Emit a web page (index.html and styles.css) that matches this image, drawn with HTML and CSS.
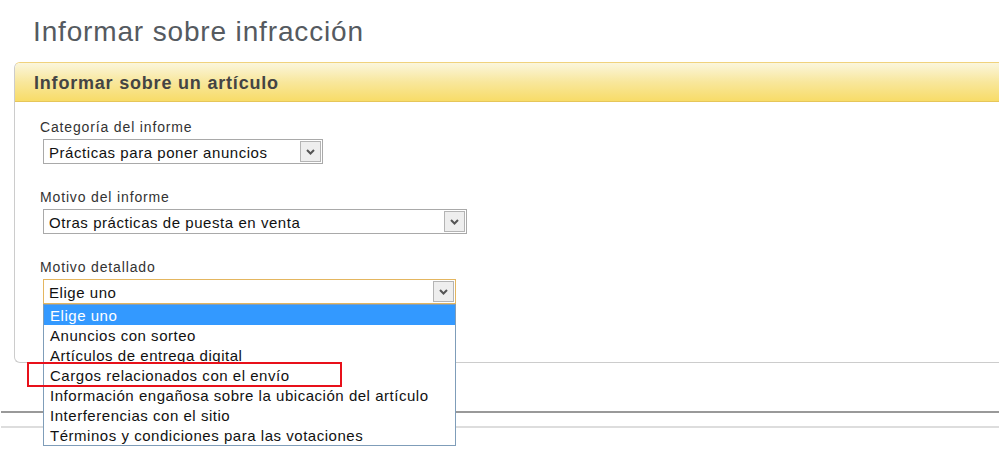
FILE: index.html
```html
<!DOCTYPE html>
<html lang="es">
<head>
    <meta charset="UTF-8">
    <meta name="viewport" content="width=device-width, initial-scale=1.0">
    <title>Informar sobre infracción</title>
    <link rel="stylesheet" href="styles.css">
</head>
<body>
    <h1 class="page-title">Informar sobre infracción</h1>

    <div class="panel">
        <div class="panel-head">Informar sobre un artículo</div>
        <div class="panel-body">
            <div class="field">
                <div class="field-label">Categoría del informe</div>
                <div class="fake-select select-short">
                    <span class="select-text">Prácticas para poner anuncios</span>
                    <span class="select-arrow">
                        <svg width="9" height="6" viewBox="0 0 9 6"><path d="M1 1 L4.5 4.5 L8 1" fill="none" stroke="#555" stroke-width="2"/></svg>
                    </span>
                </div>
            </div>

            <div class="field">
                <div class="field-label">Motivo del informe</div>
                <div class="fake-select select-long">
                    <span class="select-text">Otras prácticas de puesta en venta</span>
                    <span class="select-arrow">
                        <svg width="9" height="6" viewBox="0 0 9 6"><path d="M1 1 L4.5 4.5 L8 1" fill="none" stroke="#555" stroke-width="2"/></svg>
                    </span>
                </div>
            </div>

            <div class="field">
                <div class="field-label">Motivo detallado</div>
                <div class="select-wrap">
                    <div class="fake-select select-mid focused">
                        <span class="select-text">Elige uno</span>
                        <span class="select-arrow">
                            <svg width="9" height="6" viewBox="0 0 9 6"><path d="M1 1 L4.5 4.5 L8 1" fill="none" stroke="#555" stroke-width="2"/></svg>
                        </span>
                    </div>

                    <!-- open dropdown list -->
                    <ul class="option-list">
                        <li class="selected">Elige uno</li>
                        <li>Anuncios con sorteo</li>
                        <li>Artículos de entrega digital</li>
                        <li>Cargos relacionados con el envío</li>
                        <li>Información engañosa sobre la ubicación del artículo</li>
                        <li>Interferencias con el sitio</li>
                        <li>Términos y condiciones para las votaciones</li>
                    </ul>
                    <div class="highlight-box"></div>
                </div>
            </div>
        </div>
    </div>

    <div class="rule rule-dark"></div>
    <div class="rule rule-light"></div>
</body>
</html>
```

FILE: styles.css
```css
* {
    margin: 0;
    padding: 0;
    box-sizing: border-box;
}

body {
    font-family: "Liberation Sans", Arial, sans-serif;
    background: #fff;
    color: #333;
    min-height: 474px;
}

.page-title {
    font-weight: normal;
    font-size: 28px;
    letter-spacing: 0.85px;
    color: #555a60;
    padding: 16px 0 0 33px;
    height: 62px;
}

/* Panel with yellow header, runs off the right edge */
.panel {
    margin-left: 14px;
    border: 1px solid #ccc;
    border-right: none;
    border-top-color: #f0d27c;
    border-radius: 6px 0 0 6px;
}

.panel-head {
    height: 39px;
    padding: 10px 0 0 19px;
    font-size: 18px;
    font-weight: bold;
    letter-spacing: 0.8px;
    color: #444;
    background: linear-gradient(to bottom, #fbf6dc 0%, #f8e79c 50%, #f8dc68 100%);
    border-bottom: 1px solid #e6c65a;
    border-radius: 5px 0 0 0;
}

.panel-body {
    padding: 16px 0 58px 25px;
}

.field + .field {
    margin-top: 24px;
}

.field-label {
    font-size: 14px;
    letter-spacing: 0.85px;
    color: #333;
    height: 21px;
    padding-top: 1px;
}

.fake-select {
    display: flex;
    align-items: stretch;
    height: 25px;
    margin-left: 3px;
    border: 1px solid #a9a9a9;
    background: #fff;
}

.fake-select.focused {
    border-color: #e4b660;
}

.select-short { width: 280px; }
.select-long { width: 424px; }
.select-mid { width: 413px; }

.select-text {
    flex: 1;
    padding: 4px 0 0 5px;
    font-size: 15px;
    letter-spacing: 0.55px;
    color: #111;
}

.select-arrow {
    width: 21px;
    margin: 1px;
    border: 1px solid #b4b4b4;
    background: #eeeeee;
    display: flex;
    align-items: center;
    justify-content: center;
}

.select-wrap {
    position: relative;
}

.option-list {
    position: absolute;
    left: 3px;
    top: 25px;
    width: 413px;
    list-style: none;
    background: #fff;
    border: 1px solid #7f9db9;
    z-index: 2;
}

.option-list li {
    height: 20px;
    padding: 2px 0 0 6px;
    font-size: 15px;
    letter-spacing: 0.53px;
    color: #111;
    white-space: nowrap;
}

.option-list li.selected {
    background: #3399ff;
    color: #fff;
}

.highlight-box {
    position: absolute;
    left: -13px;
    top: 83px;
    width: 315px;
    height: 25px;
    border: 2px solid #e8101a;
    z-index: 3;
}

/* Rules under the panel */
.rule {
    margin-left: 1px;
    height: 2px;
}

.rule-dark {
    margin-top: 48px;
    background: #999;
}

.rule-light {
    margin-top: 13px;
    background: #ddd;
}
```
